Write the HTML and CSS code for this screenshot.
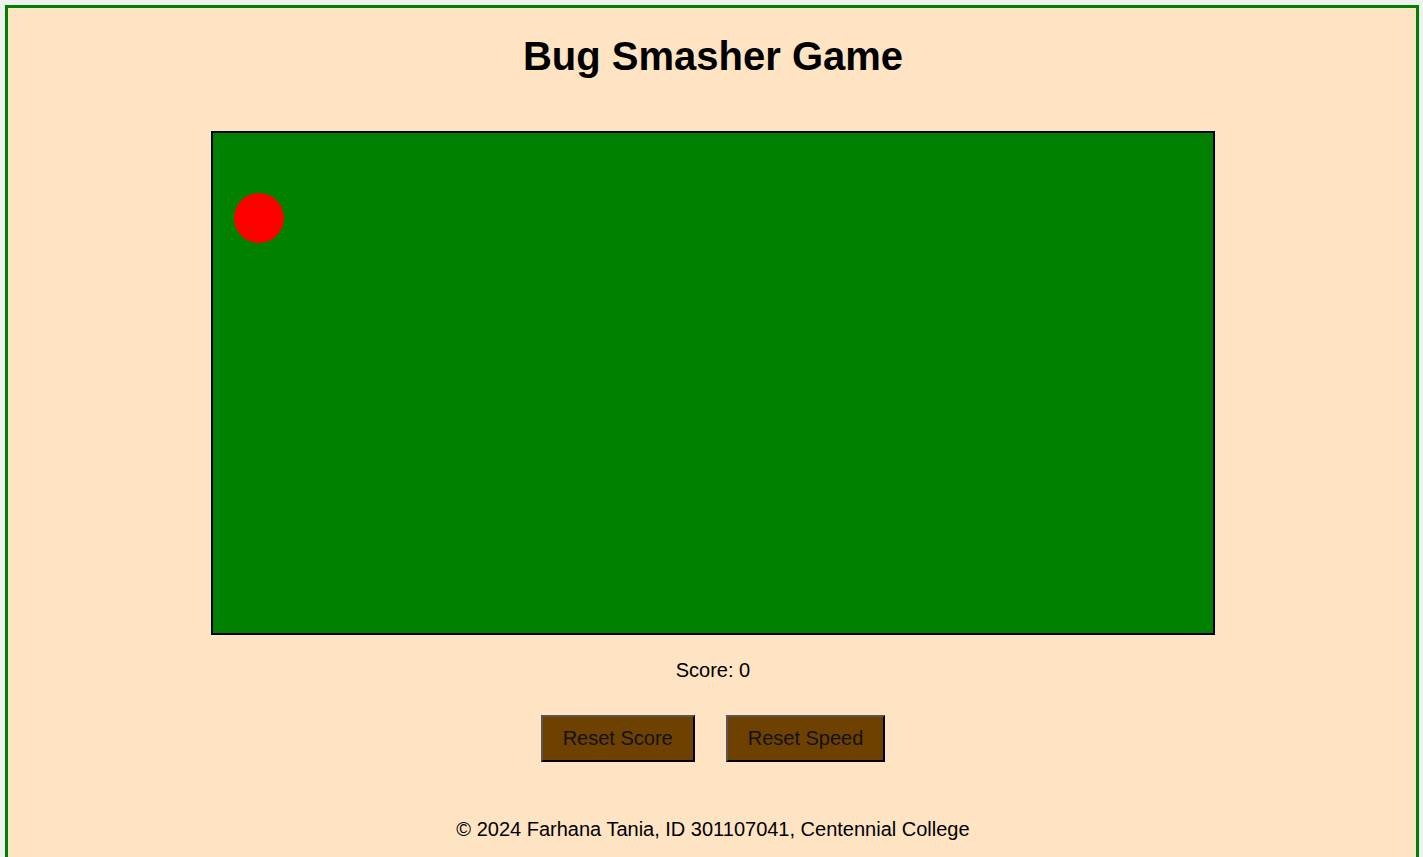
FILE: index.html
```html
<!DOCTYPE html>
<html lang="en">
<head>
<meta charset="utf-8">
<title>Bug Smasher Game</title>
<link rel="stylesheet" href="styles.css">
</head>
<body>
  <h1 class="title">Bug Smasher Game</h1>
  <div class="board">
    <div class="bug"></div>
  </div>
  <p class="score">Score: 0</p>
  <div class="controls">
    <button class="btn" type="button">Reset Score</button>
    <button class="btn" type="button">Reset Speed</button>
  </div>
  <footer class="footer">© 2024 Farhana Tania, ID 301107041, Centennial College</footer>
</body>
</html>
```
FILE: styles.css
```css
html {
  background: #f0f0f0;
  overflow: hidden;
}
body {
  margin: 5px 4px 5px 5px;
  padding-left: 2px;
  border: 3px solid #008000;
  background: #ffe4c4;
  font-family: "Liberation Sans", Arial, sans-serif;
  font-size: 20px;
  color: #000;
  text-align: center;
  min-height: 900px;
}
.title {
  font-size: 40px;
  font-weight: bold;
  margin: 25px 0 0;
  line-height: 46px;
}
.board {
  position: relative;
  width: 1000px;
  height: 500px;
  margin: 52px auto 0;
  border: 2px solid #000;
  background: #008000;
}
.bug {
  position: absolute;
  left: 21px;
  top: 60px;
  width: 50px;
  height: 50px;
  border-radius: 50%;
  background: #ff0000;
}
.score {
  margin: 24px 0 0;
  line-height: 23px;
}
.controls {
  display: flex;
  justify-content: center;
  gap: 31px;
  margin-top: 33px;
}
.btn {
  font-family: "Liberation Sans", Arial, sans-serif;
  font-size: 20px;
  line-height: 23px;
  padding: 10px 20px;
  background: #6e4100;
  color: #111;
  border: 2px solid;
  border-color: #565656 #000 #000 #565656;
}
.footer {
  margin-top: 56px;
  line-height: 23px;
}
```
